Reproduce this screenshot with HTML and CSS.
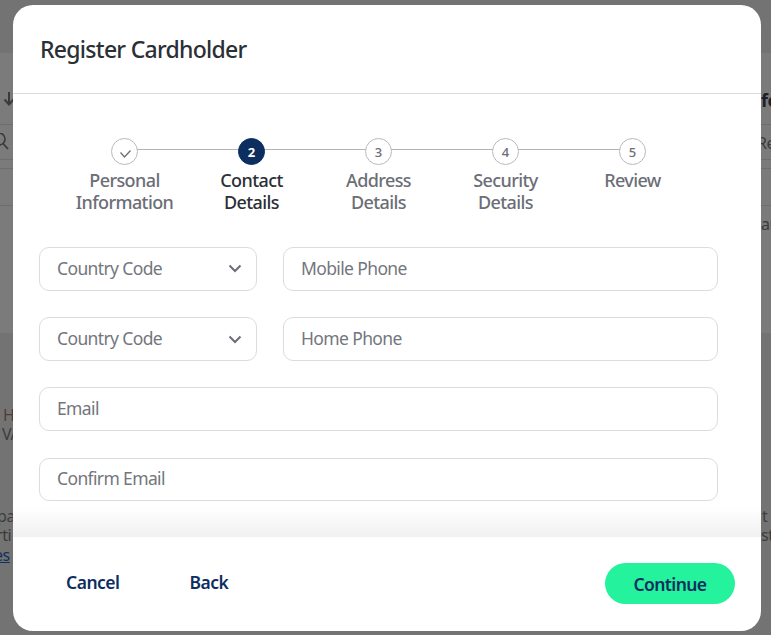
FILE: index.html
```html
<!DOCTYPE html>
<html>

	<head>
		<meta charset="UTF-8">
		<title>Register Cardholder</title>
		<link rel="stylesheet" href="styles.css">
	</head>

	<body>
		<div class="backdrop">
			<div class="bg-band"></div>
			<div class="bg-rule bg-rule-a"></div>
			<div class="bg-rule bg-rule-b"></div>
			<div class="bg-rule bg-rule-c"></div>
			<div class="bg-rule bg-rule-d"></div>
			<svg class="bg-arrow" width="12" height="16" viewBox="0 0 12 16">
				<path d="M6 1 V13 M1.5 8.5 L6 13.5 L10.5 8.5" fill="none" stroke="#3a3a3a" stroke-width="2"/>
			</svg>
			<span class="bg-text bg-fe">fe</span>
			<span class="bg-text bg-re">Re</span>
			<span class="bg-text bg-ar">ar</span>
			<span class="bg-text bg-h">H</span>
			<span class="bg-text bg-va">VA</span>
			<span class="bg-text bg-pa">pa</span>
			<span class="bg-text bg-rti">rti</span>
			<span class="bg-text bg-es">es</span>
			<span class="bg-text bg-t">t</span>
			<span class="bg-text bg-st">st</span>
			<svg class="bg-search" width="20" height="20" viewBox="0 0 20 20">
				<circle cx="-1" cy="6" r="6" fill="none" stroke="#3a3a3a" stroke-width="1.6"/>
				<path d="M3 10.5 L8 16" fill="none" stroke="#3a3a3a" stroke-width="1.8"/>
			</svg>
		</div>

		<div class="modal">
			<header class="modal-head">
				<h1>Register Cardholder</h1>
			</header>

			<div class="modal-body">
				<ol class="steps">
					<li class="step done">
						<span class="dot">
							<svg width="14" height="14" viewBox="0 0 14 14">
								<path d="M2.5 7.5 L6.5 12 L12.5 5.5" fill="none" stroke="#6b6e76" stroke-width="1.3"/>
							</svg>
						</span>
						<span class="label">Personal<br>Information</span>
					</li>
					<li class="step current">
						<span class="dot">2</span>
						<span class="label">Contact<br>Details</span>
					</li>
					<li class="step">
						<span class="dot">3</span>
						<span class="label">Address<br>Details</span>
					</li>
					<li class="step">
						<span class="dot">4</span>
						<span class="label">Security<br>Details</span>
					</li>
					<li class="step">
						<span class="dot">5</span>
						<span class="label">Review</span>
					</li>
				</ol>

				<form class="form">
					<div class="row">
						<div class="field select">
							Country Code
							<svg width="14" height="9" viewBox="0 0 14 9">
								<path d="M1.5 1.5 L7 7 L12.5 1.5" fill="none" stroke="#6b6e76" stroke-width="2"/>
							</svg>
						</div>
						<div class="field grow">Mobile Phone</div>
					</div>
					<div class="row">
						<div class="field select">
							Country Code
							<svg width="14" height="9" viewBox="0 0 14 9">
								<path d="M1.5 1.5 L7 7 L12.5 1.5" fill="none" stroke="#6b6e76" stroke-width="2"/>
							</svg>
						</div>
						<div class="field grow">Home Phone</div>
					</div>
					<div class="row">
						<div class="field grow">Email</div>
					</div>
					<div class="row">
						<div class="field grow">Confirm Email</div>
					</div>
				</form>
				<div class="fade"></div>
			</div>

			<footer class="modal-foot">
				<a class="link link-cancel">Cancel</a>
				<a class="link">Back</a>
				<button class="btn" type="button">Continue</button>
			</footer>
		</div>
	</body>

</html>
```

FILE: styles.css
```css
* {
	box-sizing: border-box;
}

html,
body {
	height: 100%;
}

body {
	margin: 0;
	padding: 5px 10px 4px 13px;
	overflow: hidden;
	background-color: #737373;
	font-family: "Noto Sans", sans-serif;
}

/* page behind the dialog */
.backdrop {
	position: absolute;
	left: 0;
	top: 0;
	width: 771px;
	height: 635px;
	overflow: hidden;
}

.bg-band {
	position: absolute;
	left: 0;
	top: 53px;
	width: 771px;
	height: 280px;
	background-color: #7b7b7b;
}

.bg-rule {
	position: absolute;
	left: 0;
	width: 771px;
	height: 1px;
	background-color: #6d6d6d;
}

.bg-rule-a {
	top: 124px;
}

.bg-rule-b {
	top: 159px;
}

.bg-rule-c {
	top: 168px;
}

.bg-rule-d {
	top: 205px;
}

.bg-text {
	position: absolute;
	font-size: 16px;
	line-height: 18px;
	letter-spacing: -0.4px;
	color: #3c3c3c;
}

.bg-arrow {
	position: absolute;
	left: 3px;
	top: 91px;
}

.bg-fe {
	left: 761px;
	top: 91px;
	font-size: 18px;
	font-weight: 700;
	color: #1c2028;
}

.bg-re {
	left: 757px;
	top: 134px;
}

.bg-ar {
	left: 761px;
	top: 215px;
}

.bg-h {
	left: 3px;
	top: 406px;
	color: #4e3c36;
}

.bg-va {
	left: 2px;
	top: 425px;
}

.bg-pa {
	left: -3px;
	top: 507px;
}

.bg-rti {
	left: -4px;
	top: 526px;
}

.bg-es {
	left: -6px;
	top: 546px;
	color: #12305a;
	text-decoration: underline;
}

.bg-t {
	left: 762px;
	top: 507px;
}

.bg-st {
	left: 761px;
	top: 526px;
}

.bg-search {
	position: absolute;
	left: 0;
	top: 133px;
}

/* dialog */
.modal {
	position: relative;
	display: flex;
	flex-direction: column;
	width: 748px;
	height: 626px;
	background-color: #fff;
	border-radius: 20px;
	overflow: hidden;
}

.modal-head {
	height: 89px;
	padding: 0 27px;
	border-bottom: 1px solid #dcdcdc;
}

.modal-head h1 {
	margin: 0;
	font-size: 23px;
	font-weight: 500;
	line-height: 88px;
	letter-spacing: -0.72px;
	color: #2b2f36;
}

.modal-body {
	position: relative;
	flex: 1;
	padding: 44px 43px 0 26px;
}

.steps {
	display: flex;
	margin: 0 0 34px;
	padding: 0 22px;
	list-style: none;
}

.step {
	position: relative;
	flex: 1;
	display: flex;
	flex-direction: column;
	align-items: center;
	text-align: center;
}

.step::before {
	content: "";
	position: absolute;
	left: 50%;
	top: 11px;
	width: 100%;
	height: 1px;
	background-color: #b4b4b4;
}

.step:last-child::before {
	display: none;
}

.dot {
	position: relative;
	display: flex;
	align-items: center;
	justify-content: center;
	width: 27px;
	height: 27px;
	border: 1px solid #b9b9b9;
	border-radius: 50%;
	background-color: #fff;
	font-size: 13px;
	font-weight: 500;
	color: #6b6e76;
}

.label {
	margin-top: 4px;
	font-size: 18px;
	font-weight: 500;
	line-height: 22px;
	letter-spacing: -0.6px;
	color: #6b6e76;
}

.current .dot {
	border-color: #0d2f5f;
	background-color: #0d2f5f;
	color: #fff;
	font-weight: 700;
}

.current .label {
	color: #2b2f36;
}

.form {
	display: flex;
	flex-direction: column;
	gap: 26.4px;
}

.row {
	display: flex;
	gap: 26px;
}

.field {
	display: flex;
	align-items: center;
	justify-content: space-between;
	height: 43.8px;
	padding: 0 17px 2px;
	border: 1px solid #dcdcdc;
	border-radius: 10px;
	font-size: 17.5px;
	letter-spacing: -0.63px;
	color: #74767d;
}

.field svg {
	margin-top: 2px;
}

.select {
	width: 218px;
	padding-right: 14px;
}

.grow {
	flex: 1;
}

.fade {
	position: absolute;
	left: 0;
	right: 0;
	bottom: 0;
	height: 30px;
	background: linear-gradient(to bottom, rgba(240, 240, 240, 0), #f0f0f0);
}

.modal-foot {
	display: flex;
	align-items: center;
	height: 94px;
	padding: 0 26px 0 53px;
}

.link {
	margin-bottom: 4px;
	font-size: 17.5px;
	font-weight: 600;
	letter-spacing: -0.5px;
	color: #0d2f5f;
}

.link-cancel {
	margin-right: 70px;
}

.btn {
	margin: 0 0 1px auto;
	padding: 1px 0 0;
	width: 130px;
	height: 41px;
	border: 0;
	border-radius: 21px;
	background-color: #24f29c;
	font-family: inherit;
	font-size: 17.5px;
	font-weight: 600;
	letter-spacing: -0.6px;
	color: #0d2f5f;
}
```
